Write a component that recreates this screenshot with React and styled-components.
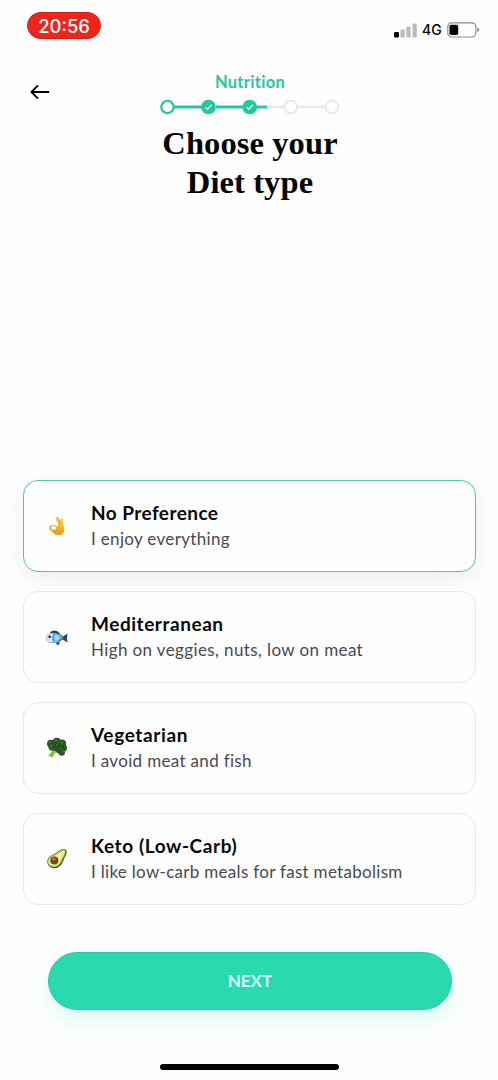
import React from 'react';
import styled, { createGlobalStyle } from 'styled-components';

const diets = [
    { name: 'No Preference', text: 'I enjoy everything', icon: OkHand, nameGap: '0.43px', textGap: '0.33px' },
    { name: 'Mediterranean', text: 'High on veggies, nuts, low on meat', icon: Fish, nameGap: '0.55px', textGap: '0.39px' },
    { name: 'Vegetarian', text: 'I avoid meat and fish', icon: Broccoli, nameGap: '0.65px', textGap: '0.33px' },
    { name: 'Keto (Low-Carb)', text: 'I like low-carb meals for fast metabolism', icon: Avocado, nameGap: '0.6px', textGap: '0.3px' },
];

function OkHand() {
    return (
        <svg width="24" height="24" viewBox="0 0 24 24">
            <defs>
                <linearGradient id="skin" x1="0" y1="0" x2="0" y2="1">
                    <stop offset="0" stopColor="#ffd64a" />
                    <stop offset="1" stopColor="#e6a51c" />
                </linearGradient>
            </defs>
            <path d="M10.6 3.3C11.7 1.7 13.6 2.5 14 4.2L15.2 7.5L15.8 5.2C16.4 3.8 18 4.3 18 5.7L18.2 11.5C20 14 19.7 18 17.5 20C14.7 22.4 10 21.2 8 18.8L5 16.3C3.2 14.5 3.8 11.9 6.2 11.3C9 10.5 11.4 11.2 12.8 12.6L13.2 9.8L10.8 5.2Z" fill="url(#skin)" />
            <ellipse cx="8.8" cy="14" rx="2.8" ry="1.7" fill="#fff" />
            <path d="M8.2 17.2C11 17.6 12.3 16 12.9 13.4M10 18.9C13.5 19.5 16.2 17.7 16.5 14.2M13.8 5L15.2 9.8" fill="none" stroke="#c4851d" strokeWidth=".7" />
        </svg>
    );
}

function Fish() {
    return (
        <svg width="24" height="24" viewBox="0 0 24 24">
            <path d="M5 7.8C7 4.5 12 4.8 15 8.5L12 11ZM10 17L13 20.4L15.2 17.5ZM17 12L22.7 8.4C21.7 11.3 21.8 14.2 22.8 17.5L17 14.3Z" fill="#234565" />
            <path d="M1.3 12C3.6 7 12.5 5.5 19.2 12.5C14 19.6 5 19.6 1.3 14.5Z" fill="#3f719c" />
            <path d="M1.5 12C4 7.6 12 6.3 17.7 12.4C13 18 5 18.2 1.5 14.5Z" fill="#73b1da" />
            <path d="M1.6 13C4.6 15.2 9 17.2 14.2 16.2C9.4 18.6 3.8 17.5 1.6 14.5Z" fill="#d5eef5" />
            <path d="M2 11.4C3.6 8.6 6.7 8.1 9 8.9C6.8 11 7 14.4 8.5 17C5.8 16.7 3.3 16 1.5 14Z" fill="#cde9f3" />
            <path d="M10 10.5C12 9.4 14 10.4 14.3 12.4C14.5 14.4 12.8 15.5 11.4 15.8C9.6 14.3 9.2 12.4 10 10.5Z" fill="#a5dcf2" />
            <path d="M9 9C7.2 11.7 7.6 15 9.2 17" fill="none" stroke="#397ba6" strokeWidth=".7" />
            <circle cx="4.7" cy="11.8" r="1.3" fill="#172a3b" />
        </svg>
    );
}

function Broccoli() {
    return (
        <svg width="24" height="24" viewBox="0 0 24 24">
            <path d="M7.7 12L13 15.4L9.7 17L7.4 21.5L3.4 19.5L7 15.7Z" fill="#72b52c" />
            <path d="M8 13.3L9 16L5.2 20" fill="none" stroke="#a9d84d" />
            <g fill="#285922">
                <circle cx="6" cy="7.8" r="4" />
                <circle cx="11.8" cy="5.8" r="4" />
                <circle cx="17" cy="7.4" r="4" />
                <circle cx="18.6" cy="12" r="3.4" />
                <circle cx="14.5" cy="13.4" r="4" />
                <circle cx="16.7" cy="16.6" r="3.2" />
                <circle cx="7.2" cy="11" r="3.7" />
                <circle cx="11" cy="11" r="4" />
            </g>
            <path d="M3.8 6.5L6 5.7M10 4.6L13 4M15.8 6.8L18 6.5M10 9L13 8.5M5 10L7.4 9.5M14 12.3L16.5 11.8M17 15L18.7 14.8" stroke="#538142" strokeWidth="1.2" />
            <path d="M8.7 6.9L10.5 9L8.6 12M13.6 8.6L15 11L12 14M18.6 10L16.6 13" fill="none" stroke="#163b17" />
        </svg>
    );
}

function Avocado() {
    return (
        <svg width="24" height="24" viewBox="0 0 24 24">
            <path d="M2.3 15C2.3 10.6 5.6 8.5 9.5 6.8C13 5.3 15.5 1.8 19 2.1C22 2.3 22.4 5.7 20.7 8.5C18.4 12.3 17.7 18.6 12.2 20.8C7.4 22.5 2.7 19.8 2.3 15Z" fill="#355822" />
            <path d="M2.6 14.6C2.9 10.7 6 8.8 9.7 7.3C13 5.8 15.6 2.3 18.6 2.5C21 2.7 21 5.3 19.7 7.8C17.7 11.4 16.7 17.2 11.8 19.5C7.2 21.2 2.6 18.7 2.6 14.6Z" fill="#c0cf57" />
            <path d="M3.8 14.6C4.4 11.4 7.2 9.7 10.5 8.4C13.7 7.2 16 3.6 18.5 3.7C20 4 19.2 6.2 18.2 8C16 11.8 15.5 16 11.4 18C7.7 19.8 3.7 18 3.8 14.6Z" fill="#edf0a0" />
            <circle cx="9.3" cy="13.5" r="4" fill="#79401e" />
            <ellipse cx="8.6" cy="12.2" rx="1.9" ry="1.4" fill="#b97547" />
        </svg>
    );
}

function StatusBar() {
    return (
        <Status>
            <Clock>20:56</Clock>
            <Signal>
                <svg width="24" height="15" viewBox="0 0 24 15">
                    <rect x="0" y="9" width="5" height="5.5" rx="1.2" fill="#000" />
                    <rect x="6.5" y="6.5" width="4.3" height="8" rx="1" fill="#bbb" />
                    <rect x="12.3" y="3.7" width="4.3" height="10.8" rx="1" fill="#bbb" />
                    <rect x="18.5" y=".5" width="4.3" height="14" rx="1" fill="#bbb" />
                </svg>
                <Network>4G</Network>
                <svg width="33" height="16" viewBox="0 0 33 16">
                    <rect x=".8" y=".8" width="28" height="14.2" rx="4" fill="none" stroke="#8d8d8d" strokeWidth="1.2" />
                    <rect x="2.5" y="2.7" width="8.7" height="10.4" rx="1.8" fill="#000" />
                    <path d="M30.5 5.3Q33.4 7.8 30.5 10.3Z" fill="#555" />
                </svg>
            </Signal>
        </Status>
    );
}

function Progress() {
    return (
        <Steps width="180" height="16" viewBox="0 0 180 16">
            <path d="M107 8H124M138 8H165" stroke="#e8e7ec" strokeWidth="2.6" />
            <path d="M14 8H42M56 8H83M96 8H107" stroke="#25c79f" strokeWidth="3.2" />
            <circle cx="7.5" cy="8" r="6.2" fill="#fff" stroke="#25c79f" strokeWidth="2.2" />
            {[48.5, 89.7].map((x) => (
                <g key={x}>
                    <circle cx={x} cy="8" r="7.3" fill="#25c79f" />
                    <path d={`M${x - 3} 8.2L${x - 1} 10.2L${x + 3.2} 5.8`} fill="none" stroke="#d8fff4" strokeWidth="1.5" />
                </g>
            ))}
            {[130.8, 172].map((x) => (
                <circle key={x} cx={x} cy="8" r="6.3" fill="#fff" stroke="#e8e7ec" strokeWidth="1.9" />
            ))}
        </Steps>
    );
}

function App() {
    return (
        <>
            <GlobalStyle />
            <Screen>
                <StatusBar />
                <Header>
                    <BackButton aria-label="Back">
                        <svg width="20" height="16" viewBox="0 0 20 16">
                            <path d="M19.2 8H1.5M8 1.4L1.4 8L8 14.6" fill="none" stroke="#000" strokeWidth="1.8" strokeLinejoin="round" />
                        </svg>
                    </BackButton>
                    <Heading>
                        <Section>Nutrition</Section>
                        <Progress />
                        <Title>Choose your<br />Diet type</Title>
                    </Heading>
                </Header>
                <DietList>
                    {diets.map((diet, index) => (
                        <DietCard key={diet.name} $selected={index === 0}>
                            <diet.icon />
                            <div>
                                <DietName $gap={diet.nameGap}>{diet.name}</DietName>
                                <DietText $gap={diet.textGap}>{diet.text}</DietText>
                            </div>
                        </DietCard>
                    ))}
                </DietList>
                <NextButton>NEXT</NextButton>
                <HomeBar />
            </Screen>
        </>
    );
}

export default App;

const GlobalStyle = createGlobalStyle`
    * {
        box-sizing: border-box;
    }
    body {
        margin: 0;
        background: #fefefe;
        font-family: Lato, "Liberation Sans", sans-serif;
    }
    svg {
        display: block;
        flex-shrink: 0;
    }
`;

const Screen = styled.div`
    display: flex;
    flex-direction: column;
    height: 1080px;
    overflow: hidden;
`;

const Status = styled.div`
    display: flex;
    justify-content: space-between;
    height: 72px;
    padding: 12px 18px 0 27px;
`;

const Clock = styled.div`
    width: 74px;
    height: 27px;
    border-radius: 14px;
    background: #ed251d;
    border: 1px solid #d61b16;
    color: #fff;
    font: 500 18.4px/27px Inter, sans-serif;
    text-align: center;
`;

const Signal = styled.div`
    display: flex;
    align-items: center;
    height: 16px;
    margin-top: 10px;
`;

const Network = styled.div`
    width: 29px;
    font: 500 14px/16px Inter, sans-serif;
    padding-left: 4px;
`;

const Header = styled.header`
    display: grid;
    grid-template-columns: 160px 180px 1fr;
    height: 408px;
`;

const BackButton = styled.button`
    width: 20px;
    height: 16px;
    margin: 12px 0 0 30px;
    padding: 0;
    border: 0;
    background: none;
`;

const Heading = styled.div`
    display: flex;
    flex-direction: column;
    align-items: center;
`;

const Section = styled.div`
    height: 27px;
    color: #2ac5a0;
    font-size: 16.5px;
    font-weight: 700;
    line-height: 20px;
    letter-spacing: 0.3px;
`;

const Steps = styled.svg`
    width: 180px;
    height: 16px;
`;

const Title = styled.h1`
    margin: 9px 0 0;
    font: bold 32.5px/39px "Liberation Serif", serif;
    letter-spacing: 0.1px;
    text-align: center;
    white-space: nowrap;
    color: #050505;
`;

const DietList = styled.main`
    display: flex;
    flex-direction: column;
    gap: 19px;
    padding: 0 22px 0 23px;
`;

const DietCard = styled.div`
    display: flex;
    align-items: center;
    gap: 22px;
    height: 92px;
    padding: 0 21px;
    border: ${(props) => (props.$selected ? '1.5px solid #50c6aa' : '1px solid #e8e8ec')};
    border-radius: 15px;
    background: #fefefe;
    box-shadow: ${(props) => (props.$selected ? '0 6px 20px rgba(40, 40, 80, 0.08)' : 'none')};
`;

const DietName = styled.div`
    color: #080808;
    font-size: 19px;
    font-weight: 700;
    line-height: 26px;
    letter-spacing: ${(props) => props.$gap};
`;

const DietText = styled.div`
    color: #484852;
    font-size: 17px;
    line-height: 26px;
    letter-spacing: ${(props) => props.$gap};
    white-space: nowrap;
`;

const NextButton = styled.button`
    width: 404px;
    height: 58px;
    margin: 47px 0 0 48px;
    border: 1px solid #25cda4;
    border-radius: 29px;
    background: #29dab1;
    box-shadow: 0 10px 22px rgba(41, 220, 179, 0.16);
    color: #d9fff6;
    font: 700 17px/20px Lato, sans-serif;
`;

const HomeBar = styled.div`
    width: 179px;
    height: 6px;
    margin: 54px 0 0 160px;
    border-radius: 3px;
    background: #000;
`;
